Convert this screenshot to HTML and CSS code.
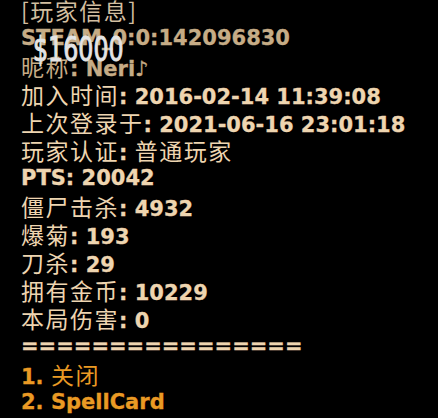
FILE: index.html
```html
<!DOCTYPE html>
<html lang="zh">

<head>
    <meta charset="UTF-8">
    <meta name="viewport" content="width=device-width, initial-scale=1.0">
    <title>玩家信息</title>
    <link rel="stylesheet" href="styles.css">
</head>

<body>
    <div class="menu">
        <div class="line title"><span class="zh">[玩家信息]</span></div>
        <div class="line dim">STEAM_0:0:142096830</div>
        <div class="line dim"><span class="zh">昵称</span>: Neri♪</div>
        <div class="line"><span class="zh">加入时间</span>: 2016-02-14 11:39:08</div>
        <div class="line"><span class="zh">上次登录于</span>: 2021-06-16 23:01:18</div>
        <div class="line"><span class="zh">玩家认证</span>: <span class="zh">普通玩家</span></div>
        <div class="line">PTS: 20042</div>
        <div class="line"><span class="zh">僵尸击杀</span>: 4932</div>
        <div class="line"><span class="zh">爆菊</span>: 193</div>
        <div class="line"><span class="zh">刀杀</span>: 29</div>
        <div class="line"><span class="zh">拥有金币</span>: 10229</div>
        <div class="line"><span class="zh">本局伤害</span>: 0</div>
        <div class="line">================</div>
        <div class="line option">1. <span class="zh">关闭</span></div>
        <div class="line option">2. SpellCard</div>
    </div>

    <div class="money">$16000</div>
</body>
</html>
```

FILE: styles.css
```css
body {
    margin: 0;
    background-color: #000;
    height: 418px;
    overflow: hidden;
    font-family: "DejaVu Sans", Verdana, sans-serif;
}

.menu {
    margin-top: -4px;
    padding-left: 21px;
    font-size: 21px;
    font-weight: bold;
    color: #eed5b0;
    -webkit-text-stroke: 0.3px currentColor;
}

.line {
    height: 28px;
    line-height: 28px;
    white-space: nowrap;
}

.zh {
    font-family: "Noto Sans CJK SC", sans-serif;
    font-weight: normal;
    font-size: 23px;
    line-height: 28px;
    letter-spacing: 1.5px;
    -webkit-text-stroke: 0;
}

.title {
    color: #d2bea0;
}

.dim {
    color: #c6ac86;
}

.option {
    color: #ea9a24;
}

.money {
    position: absolute;
    left: 33px;
    top: 32px;
    font-family: "DejaVu Sans", sans-serif;
    font-size: 33px;
    line-height: 36px;
    color: #e4e4e4;
    -webkit-text-stroke: 1px #e4e4e4;
    transform: scaleX(0.72);
    transform-origin: left top;
}
```
